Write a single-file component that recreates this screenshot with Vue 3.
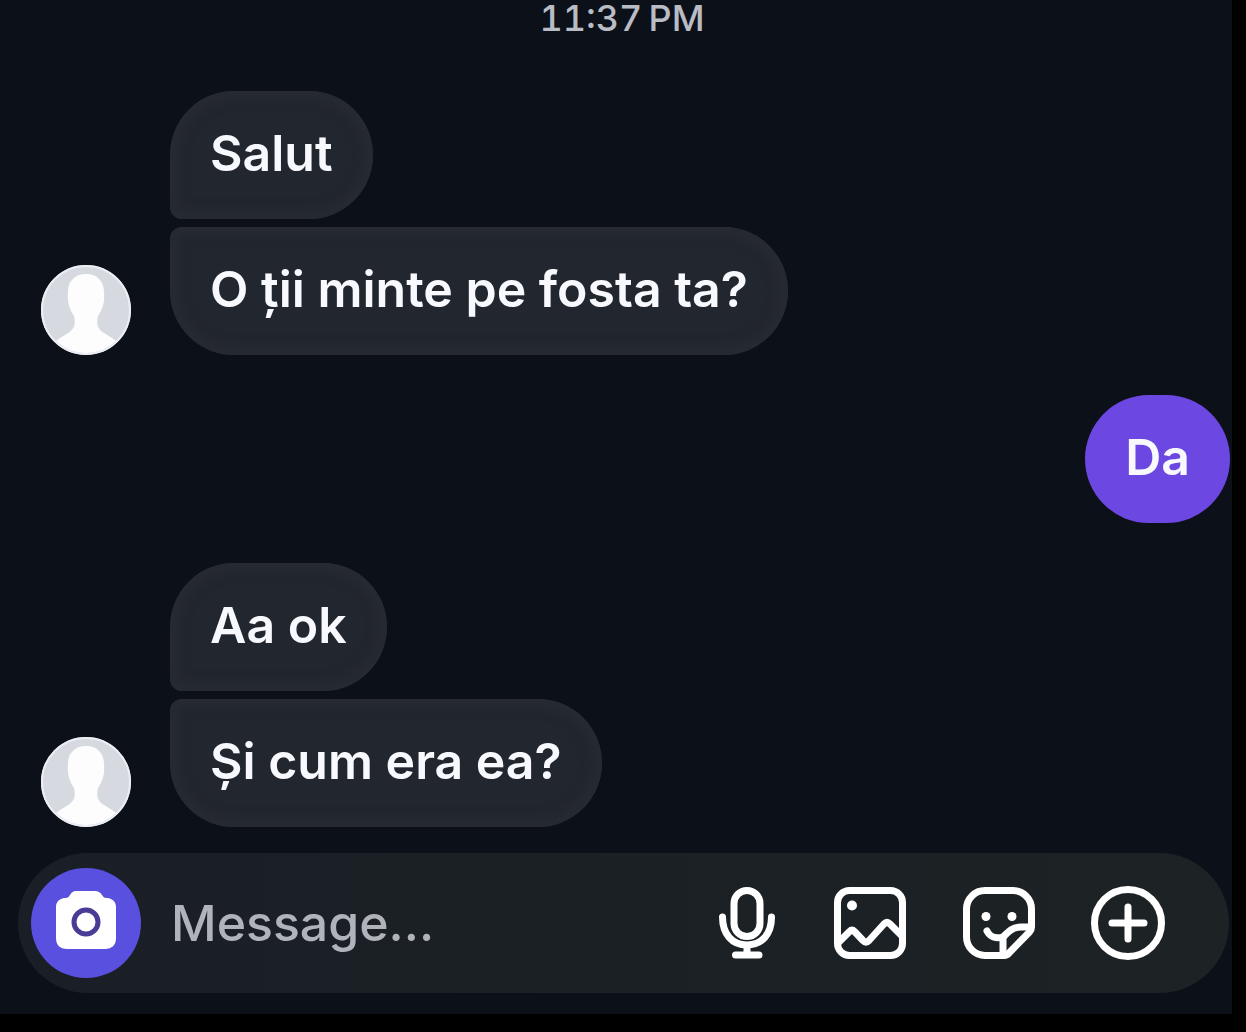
<template>
  <div class="page">
    <main class="chat">
      <time class="chat-time">11:37&thinsp;PM</time>

      <!-- Message list -->
      <section class="messages">
        <div
          v-for="group in groups"
          :key="group.id"
          class="group"
          :class="{ mine: group.mine }"
        >
          <svg v-if="!group.mine" class="avatar" viewBox="0 0 90 90" role="img" aria-label="Avatar">
            <circle cx="45" cy="45" r="45" fill="#d7d9e0" />
            <path
              d="M45 9C34 9 27 16 27 27C26 38 29 45 33 51C35 60 33 64 27 68C23 71 18 73 15 76A43 43 0 0 0 75 76C72 73 67 71 63 68C57 64 55 60 57 51C61 45 64 38 63 27C63 16 56 9 45 9Z"
              fill="#fdfdfe"
            />
            <circle cx="45" cy="45" r="44" fill="none" stroke="#eceef3" stroke-width="2" />
          </svg>
          <div class="bubbles">
            <p v-for="text in group.texts" :key="text" class="bubble">{{ text }}</p>
          </div>
        </div>
      </section>

      <!-- Composer -->
      <form class="composer" @submit.prevent>
        <button type="button" class="camera-btn" aria-label="Camera">
          <svg viewBox="0 0 110 110">
            <path
              d="M45 23H64C67 23 69 24 71 27C73 30 74 30 77 30C82 31 85 34 85 39V70C85 77 81 81 74 81H36C29 81 25 77 25 70V39C25 34 28 31 33 30C36 30 37 30 39 27C41 24 42 23 45 23Z"
              fill="#fff"
            />
            <circle cx="55" cy="54" r="12" fill="none" stroke="#483c96" stroke-width="5" />
          </svg>
        </button>
        <input v-model="draft" class="message-input" type="text" placeholder="Message..." aria-label="Message" />
        <div class="actions">
          <button type="button" class="action-btn mic-btn" aria-label="Voice message">
            <svg viewBox="0 0 64 76">
              <rect x="19" y="5.5" width="26" height="46" rx="13" />
              <path d="M7.5 32C7.5 49 17 60 32 60S56.5 49 56.5 32M32 60V70M20.5 70H44" />
            </svg>
          </button>
          <button type="button" class="action-btn" aria-label="Photo">
            <svg viewBox="0 0 76 76">
              <rect x="5.5" y="5.5" width="65" height="65" rx="12" />
              <path d="M7 57L17.5 46.5Q20 44 22.5 46.5L31 55.5Q34 58.5 37 55.5L52 39Q55 36 58 39L69 50" />
              <circle class="solid" cx="20" cy="20.5" r="5" />
            </svg>
          </button>
          <button type="button" class="action-btn" aria-label="Sticker">
            <svg viewBox="0 0 76 76">
              <path d="M43 70.5H24A18.5 18.5 0 0 1 5.5 52V24A18.5 18.5 0 0 1 24 5.5H52A18.5 18.5 0 0 1 70.5 24V42Q70.5 45 68.5 47L48 68Q46 70.5 43 70.5Z" />
              <path d="M26 46C29 52 35 54 42 52C48 46 52 42 60 42H69" />
              <path d="M42 52V69" />
              <circle class="solid" cx="25" cy="31.5" r="4.5" />
              <circle class="solid" cx="51" cy="31.5" r="4.5" />
            </svg>
          </button>
          <button type="button" class="action-btn" aria-label="More">
            <svg viewBox="0 0 76 76">
              <circle cx="38" cy="38" r="33.5" />
              <path d="M22 38H54M38 22V54" />
            </svg>
          </button>
        </div>
      </form>
    </main>
  </div>
</template>

<script setup>
import { ref } from 'vue'

const draft = ref('')

const groups = [
  { id: 1, mine: false, texts: ['Salut', 'O ții minte pe fosta ta?'] },
  { id: 2, mine: true, texts: ['Da'] },
  { id: 3, mine: false, texts: ['Aa ok', 'Și cum era ea?'] },
]
</script>

<style>
body {
  margin: 0;
  background: #000;
}
</style>

<style scoped>
.page {
  padding: 0 14px 18px 0;
  background: #000;
  font-family: Inter, 'Noto Sans', sans-serif;
  font-weight: 500;
}

.chat {
  display: flex;
  flex-direction: column;
  padding-bottom: 21px;
  background: #0c1119;
}

.chat-time {
  padding-left: 12px;
  text-align: center;
  font-size: 36px;
  font-variant-numeric: tabular-nums;
  line-height: 36px;
  color: #b9bcc5;
}

/* Messages */
.messages {
  display: flex;
  flex-direction: column;
  gap: 40px;
  padding: 55px 2px 26px 41px;
}

.group {
  display: flex;
  align-items: flex-end;
  gap: 39px;
}

.group.mine {
  justify-content: flex-end;
}

.avatar {
  flex: none;
  width: 90px;
  height: 90px;
}

.bubbles {
  display: flex;
  flex-direction: column;
  align-items: flex-start;
  gap: 8px;
}

.bubble {
  margin: 0;
  padding: 30px 40px 34px;
  border-radius: 64px;
  background: #22262e;
  box-shadow: inset 0 0 12px 8px #272b33;
  font-size: 50px;
  font-weight: 600;
  line-height: 64px;
  color: #f8f9fe;
}

.bubble:first-child:not(:last-child) {
  border-bottom-left-radius: 12px;
}

.bubble:last-child:not(:first-child) {
  border-top-left-radius: 12px;
}

.mine .bubble {
  background: #6c47e2;
  box-shadow: none;
}

/* Composer */
.composer {
  display: flex;
  align-items: center;
  margin: 0 3px 0 18px;
  padding: 15px 63px 15px 13px;
  border-radius: 70px;
  background: linear-gradient(90deg, #1a1f27 0%, #1b2025 40%, #1d2225 100%);
}

button {
  flex: none;
  padding: 0;
  border: 0;
  background: none;
  cursor: pointer;
}

button svg {
  display: block;
  width: 100%;
}

.camera-btn {
  width: 110px;
  height: 110px;
  border-radius: 50%;
  background: #5a50df;
}

.message-input {
  flex: 1;
  min-width: 0;
  margin-left: 30px;
  padding: 0;
  border: 0;
  outline: 0;
  background: none;
  font: inherit;
  font-size: 50px;
  line-height: 64px;
  color: #f8f9fe;
}

.message-input::placeholder {
  color: #b0b3ba;
  opacity: 1;
}

.actions {
  display: flex;
  gap: 53px;
}

.action-btn {
  width: 76px;
}

.mic-btn {
  width: 64px;
}

.action-btn svg {
  fill: none;
  stroke: #fff;
  stroke-width: 7;
  stroke-linecap: round;
  stroke-linejoin: round;
}

.action-btn .solid {
  fill: #fff;
  stroke: none;
}
</style>
